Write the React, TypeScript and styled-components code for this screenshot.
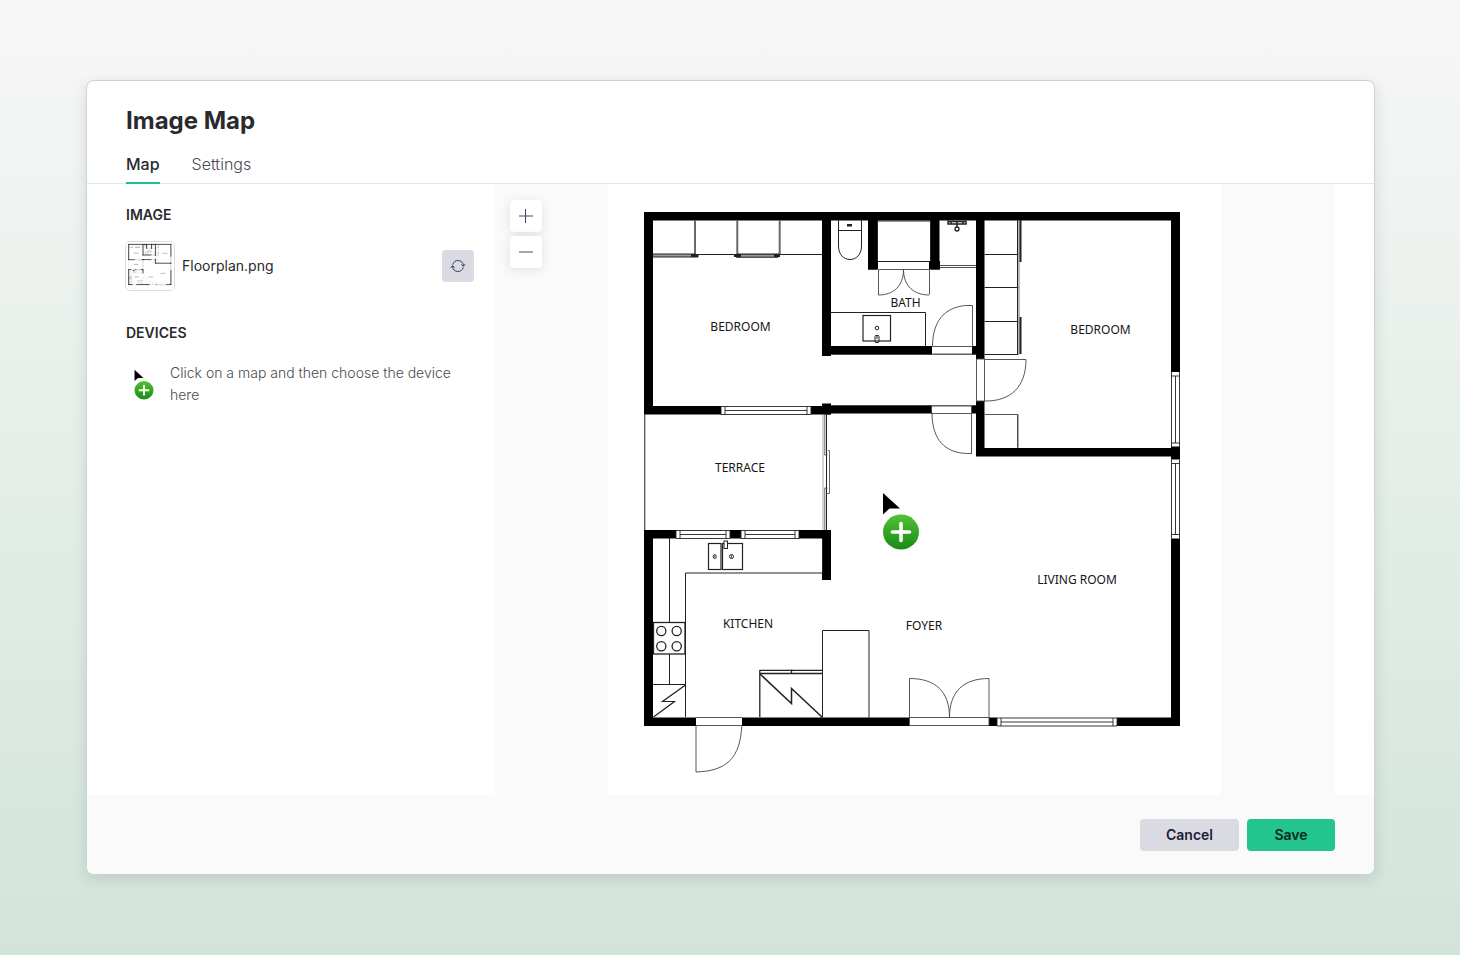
import React from "react";
import styled, { createGlobalStyle } from "styled-components";

const GlobalStyle = createGlobalStyle`
  * { box-sizing: border-box; }
  body {
    margin: 0;
    font-family: Inter, "Liberation Sans", sans-serif;
    font-size: 14px;
    line-height: 22px;
    color: #2a2a2e;
  }
`;

const Page = styled.main`
  min-height: 100vh;
  padding: 80px 85px 80px 86px;
  background: linear-gradient(180deg, #f7f7f7 0%, #d2e4d9 100%);
`;

const Dialog = styled.section`
  display: flex;
  flex-direction: column;
  height: calc(100vh - 160px);
  min-height: 560px;
  overflow: hidden;
  background: #ffffff;
  border: 1px solid #cbd3d8;
  border-radius: 8px;
  box-shadow: 0 4px 14px rgba(40, 60, 60, 0.14);
`;

const Header = styled.header`
  padding: 24px 39px 0;
  border-bottom: 1px solid #e3e5e7;
`;

const Title = styled.h1`
  margin: 0;
  font-size: 24px;
  line-height: 32px;
  font-weight: 700;
`;

const Tabs = styled.nav`
  display: flex;
  gap: 32px;
  margin: 15px 0 -1px;
`;

const Tab = styled.button<{ $active?: boolean }>`
  padding: 0 0 6px;
  border: 0;
  border-bottom: 2px solid ${(p) => (p.$active ? "#1fbf88" : "transparent")};
  background: none;
  font-family: inherit;
  font-size: 16px;
  line-height: 24px;
  font-weight: ${(p) => (p.$active ? 500 : 300)};
  color: ${(p) => (p.$active ? "#2a2a2e" : "#4a4a4f")};
  cursor: pointer;
`;

const Body = styled.div`
  display: flex;
  flex: 1;
  min-height: 0;
  padding-right: 39px;
`;

const Sidebar = styled.aside`
  flex: 0 0 407px;
  padding: 20px 20px 20px 39px;
`;

const SectionTitle = styled.h2`
  margin: 0;
  font-size: 14px;
  line-height: 22px;
  font-weight: 600;
`;

const FileRow = styled.div`
  display: flex;
  align-items: center;
  gap: 8px;
  margin: 16px 0 32px;
`;

const Thumbnail = styled.div`
  width: 48px;
  height: 48px;
  border-radius: 4px;
  overflow: hidden;
  box-shadow: 0 0 0 1px #dcdcde;
`;

const FileName = styled.span`
  flex: 1;
`;

const IconButton = styled.button<{ $raised?: boolean }>`
  display: grid;
  place-items: center;
  width: 32px;
  height: 32px;
  padding: 0;
  border: 0;
  border-radius: 4px;
  background: ${(p) => (p.$raised ? "#ffffff" : "#dadae3")};
  box-shadow: ${(p) => (p.$raised ? "0 2px 12px rgba(0, 0, 0, 0.1)" : "none")};
  cursor: pointer;
`;

const Hint = styled.div`
  display: flex;
  align-items: flex-start;
  gap: 16px;
  margin-top: 18px;
  padding-left: 8px;
`;

const HintIcon = styled.svg`
  flex: none;
  width: 20px;
  height: 32px;
  margin-top: 7px;
`;

const HintText = styled.p`
  margin: 0;
  font-weight: 300;
  color: #4a4a4f;
`;

const MapCanvas = styled.div`
  position: relative;
  flex: 1;
  min-width: 0;
  background: #fafafa;
`;

const PlanDrawing = styled.svg`
  display: block;
  width: 100%;
  height: 100%;
  text {
    font-family: "Noto Sans", sans-serif;
    font-size: 12px;
    text-anchor: middle;
    fill: #161616;
  }
`;

const ZoomControls = styled.div`
  position: absolute;
  top: 16px;
  left: 16px;
  display: grid;
  gap: 4px;
`;

const Footer = styled.footer`
  display: flex;
  justify-content: flex-end;
  gap: 8px;
  padding: 24px 39px 23px;
  background: #fafafa;
`;

const Button = styled.button<{ $primary?: boolean }>`
  height: 32px;
  min-width: 88px;
  padding: 0 26px 2px;
  border: 0;
  border-radius: 4px;
  background: ${(p) => (p.$primary ? "#24c48e" : "#dadae3")};
  color: ${(p) => (p.$primary ? "#0b2a20" : "#1d1d35")};
  font-family: inherit;
  font-size: 14px;
  font-weight: 600;
  cursor: pointer;
`;

/* x, y, width, height of every solid wall */
const walls = [
  [644, 212, 536, 8.5],
  [644, 212, 9, 202],
  [644, 406, 77, 8.5],
  [811, 406, 20, 8.5],
  [822, 403.5, 9, 11],
  [822, 405.5, 110, 8],
  [822, 212, 9, 144],
  [822, 346, 110, 8.5],
  [972, 346, 12, 8.5],
  [868, 212, 9, 57.5],
  [868, 261, 10, 8.5],
  [931, 212, 8.5, 57.5],
  [929, 261, 11, 8.5],
  [976, 212, 8.5, 147],
  [976, 401, 8.5, 55],
  [972, 405.5, 8, 8],
  [976, 448, 204, 8.5],
  [1171, 212, 9, 160],
  [1171, 446.5, 9, 13],
  [1171, 538.5, 9, 187.5],
  [644, 717.5, 52, 8.5],
  [742, 717.5, 167, 8.5],
  [989, 717.5, 8, 8.5],
  [1117, 717.5, 63, 8.5],
  [644, 530, 9, 196],
  [644, 530, 32, 8.5],
  [730, 530, 11, 8.5],
  [799, 530, 32, 8.5],
  [822, 530, 9, 50],
];

const labels: [string, number, number][] = [
  ["BEDROOM", 740.5, 331],
  ["BEDROOM", 1100.5, 334],
  ["BATH", 905.5, 307],
  ["TERRACE", 740, 472],
  ["KITCHEN", 748, 628],
  ["FOYER", 924, 630],
  ["LIVING ROOM", 1077, 584],
];

function HorizontalWindow({ x, y, w }: { x: number; y: number; w: number }) {
  return (
    <path
      d={`M${x} ${y}h${w}M${x} ${y + 8}h${w}M${x + 4} ${y + 4}h${w - 8}M${x + 4} ${y}v8M${x + w - 4} ${y}v8M${x} ${y}v8M${x + w} ${y}v8`}
      strokeWidth="0.9"
    />
  );
}

function VerticalWindow({ x, y, h }: { x: number; y: number; h: number }) {
  return (
    <path
      d={`M${x} ${y}v${h}M${x + 8} ${y}v${h}M${x + 4} ${y + 4}v${h - 8}M${x} ${y + 4}h8M${x} ${y + h - 4}h8`}
      strokeWidth="0.9"
    />
  );
}

function FloorPlanShapes() {
  return (
    <>
      <rect x="608" y="184" width="613" height="611" fill="#fff" />
      <g fill="#000">
        {walls.map(([x, y, width, height], i) => (
          <rect key={i} x={x} y={y} width={width} height={height} />
        ))}
      </g>
      <g fill="none" stroke="#222" strokeWidth="1">
        {/* wardrobes of the left bedroom */}
        <path d="M695 220v34M737.300 220v34M779.700 220v34" stroke="#6a6a6a" strokeWidth="2" />
        <path d="M695 254.500h127" strokeWidth="1.200" />
        <path d="M653 255.500h42M737 256h42" stroke="#999" strokeWidth="3" />
        <path d="M653 254h42M653 257h45M737 254h42M736 257.200h42" />
        <path d="M691 255.600h7.500M734 255.600h7M774 255.600h6" strokeWidth="3" />
        <path d="M831.500 354.500h145M831.500 405.500h145" strokeWidth="0.6" />

        {/* toilet, shaft and shower */}
        <path d="M838.500 220v26c0 18 23 18 23 0v-26M839 230.500h22" />
        <rect x="847.500" y="224.500" width="4" height="1.500" fill="#222" />
        <path d="M877.500 221h53.500M877.500 220v41M930.500 220v41M878 261.500h52" />
        <path d="M878.500 269.500h51v25M878.500 269.500v25.500c14 0 25-8 25-25.500c0 17 11 25.500 25.500 25.500" stroke="#444" strokeWidth="0.9" />
        <path d="M940 265.500h36M940 267.500h36" strokeWidth="0.8" />
        <path d="M948 220.500v3.500h18v-3.500M948 221.500h18M951 221v3M963 221v3M957 221v6" strokeWidth="1.500" />
        <circle cx="957" cy="229" r="2" strokeWidth="1.300" />

        {/* washbasin */}
        <path d="M831 312.500h94.500v33.500" />
        <rect x="863" y="315.500" width="27.500" height="25.500" strokeWidth="1.200" />
        <circle cx="877" cy="328" r="1.800" />
        <rect x="875" y="335.500" width="4" height="7" rx="1" />
        <path d="M877 335v4" />

        {/* hall doors */}
        <g stroke="#444" strokeWidth="0.9">
          <path d="M932.500 346.500h40v-41h-7c-22 2-33 17-33 41zM932.500 354h40" />
          <path d="M931.500 406h40v47.500h-5c-22-1-34-14-34.500-39.500M931.500 413.500h40M931.500 406v8" />
          <path d="M976.500 359v43M984.500 359.500h41.500c0 27-15 42-41.500 41.500zM976 359h9M976 401h9" />
        </g>

        {/* wardrobes of the right bedroom */}
        <path d="M984.500 254.500h34M984.500 287.500h34M984.500 321.500h34M984.500 354.500h34M1017.500 220v134" />
        <path d="M1019 220v134" stroke="#777" />
        <path d="M1020.500 220v42M1020.500 317v37" strokeWidth="2" />
        <path d="M984.500 414.500h33v33M1018 414v34" stroke="#444" strokeWidth="0.9" />

        {/* windows */}
        <HorizontalWindow x={721} y={406.5} w={90} />
        <HorizontalWindow x={676} y={530.5} w={54} />
        <HorizontalWindow x={741} y={530.5} w={58} />
        <HorizontalWindow x={997} y={718} w={120} />
        <VerticalWindow x={1171.5} y={372} h={75} />
        <VerticalWindow x={1171.5} y={459.5} h={79} />

        {/* terrace sides */}
        <path d="M644.800 414v116M826.500 414v116" />
        <path d="M823 414v116" stroke="#aaa" />
        <path d="M824.800 414v41M824.800 488v42M828 450.500h1.500v43h-3M824.500 455h3M824.500 488h3" stroke="#555" strokeWidth="0.9" />

        {/* kitchen counters and sink */}
        <path d="M669.500 538v84M669.500 654v30M685.500 717v-144h137v-34" />
        <rect x="708.500" y="543.500" width="12.500" height="26" strokeWidth="1.200" />
        <rect x="722.500" y="543.500" width="20" height="26" strokeWidth="1.200" />
        <rect x="724" y="541" width="3.500" height="7.500" fill="#fff" />
        <ellipse cx="714.700" cy="556.500" rx="1.500" ry="2" />
        <circle cx="731.500" cy="556.500" r="2" />
        <path d="M731.500 555v3M714.700 555.500v2" strokeWidth="0.700" />

        {/* hob */}
        <rect x="653.500" y="622.500" width="31.500" height="31.500" strokeWidth="1.300" />
        <g strokeWidth="1.300">
          <circle cx="661.300" cy="631" r="4.600" />
          <circle cx="676.700" cy="631" r="4.600" />
          <circle cx="661.300" cy="646.300" r="4.600" />
          <circle cx="676.700" cy="646.300" r="4.600" />
        </g>

        {/* appliances */}
        <path d="M653 684.500h32.500M685.500 685l-23 16.500h12l-21 15.500" strokeWidth="1.200" />
        <path d="M759.500 670.300h63M759.500 673.500h63M759.800 670v47M791.500 669.500v4" strokeWidth="1.300" />
        <path d="M760 674l31.500 29.500v-15l31 29" strokeWidth="1.500" />
        <path d="M822.500 717v-86.500h46.500v87" />

        {/* entrance doors */}
        <g stroke="#444" strokeWidth="0.9">
          <path d="M696 717.500h46M696 725.500h46M696 725v47c31-1 44-14 45.800-46" />
          <path d="M909.500 726v-47.500c26 0 40 13 40 39c0-26 14-39 39.500-39v47.500M909 717.500h80M909 725.500h80" />
        </g>
      </g>
    </>
  );
}

function AddCursor({ id }: { id: string }) {
  return (
    <>
      <defs>
        <linearGradient id={id} x1="0" y1="0" x2="0" y2="1">
          <stop offset="0" stopColor="#52c234" />
          <stop offset="1" stopColor="#188a16" />
        </linearGradient>
      </defs>
      <path d="M1 1v21.500l6.500-6h10.500z" fill="#000" />
      <ellipse cx="19" cy="40" rx="18" ry="17.500" fill={`url(#${id})`} />
      <path d="M19 31.500v17M10.500 40h17" stroke="#fff" strokeWidth="3.600" strokeLinecap="round" />
    </>
  );
}

export default function App() {
  return (
    <>
      <GlobalStyle />
      <Page>
        <Dialog aria-labelledby="dialog-title">
          <Header>
            <Title id="dialog-title">Image Map</Title>
            <Tabs>
              <Tab type="button" $active>Map</Tab>
              <Tab type="button">Settings</Tab>
            </Tabs>
          </Header>
          <Body>
            <Sidebar>
              <SectionTitle>IMAGE</SectionTitle>
              <FileRow>
                <Thumbnail>
                  <PlanDrawing viewBox="614 188 600 600" aria-hidden="true">
                    <FloorPlanShapes />
                    {labels.map(([name, x, y]) => (
                      <path key={`${name}${x}`} d={`M${x - 30} ${y - 4}h60`} stroke="#999" strokeWidth="8" />
                    ))}
                  </PlanDrawing>
                </Thumbnail>
                <FileName>Floorplan.png</FileName>
                <IconButton type="button" aria-label="Replace image">
                  <svg width="16" height="16" viewBox="0 0 16 16" fill="none" stroke="#3c3c58" strokeWidth="1" strokeLinecap="round" strokeLinejoin="round">
                    <path d="M2.800 6.300A5.500 5.500 0 0 1 13.500 7.500M13.200 9.700A5.500 5.500 0 0 1 2.500 8.500" />
                    <path d="M11.700 6.800l1.800 1.400l1.400-1.700M1.100 9.500l1.400-1.700l1.800 1.400" />
                  </svg>
                </IconButton>
              </FileRow>
              <SectionTitle>DEVICES</SectionTitle>
              <Hint>
                <HintIcon viewBox="0 0 38 60" aria-hidden="true">
                  <AddCursor id="hint-green" />
                </HintIcon>
                <HintText>Click on a map and then choose the device here</HintText>
              </Hint>
            </Sidebar>
            <MapCanvas>
              <PlanDrawing viewBox="608 184 613 611" role="img" aria-label="Floorplan">
                <FloorPlanShapes />
                {labels.map(([name, x, y]) => (
                  <text key={`${name}${x}`} x={x} y={y}>{name}</text>
                ))}
                <g transform="translate(882 492)">
                  <AddCursor id="map-green" />
                </g>
              </PlanDrawing>
              <ZoomControls>
                <IconButton type="button" $raised aria-label="Zoom in">
                  <svg width="16" height="16" viewBox="0 0 16 16" strokeWidth="1">
                    <path d="M1 8h14" stroke="#85859a" strokeWidth="1.400" />
                    <path d="M7.500 1v14" stroke="#3c3c58" />
                  </svg>
                </IconButton>
                <IconButton type="button" $raised aria-label="Zoom out">
                  <svg width="16" height="16" viewBox="0 0 16 16">
                    <path d="M1 8h14" stroke="#85859a" strokeWidth="1.400" />
                  </svg>
                </IconButton>
              </ZoomControls>
            </MapCanvas>
          </Body>
          <Footer>
            <Button type="button">Cancel</Button>
            <Button type="button" $primary>Save</Button>
          </Footer>
        </Dialog>
      </Page>
    </>
  );
}
